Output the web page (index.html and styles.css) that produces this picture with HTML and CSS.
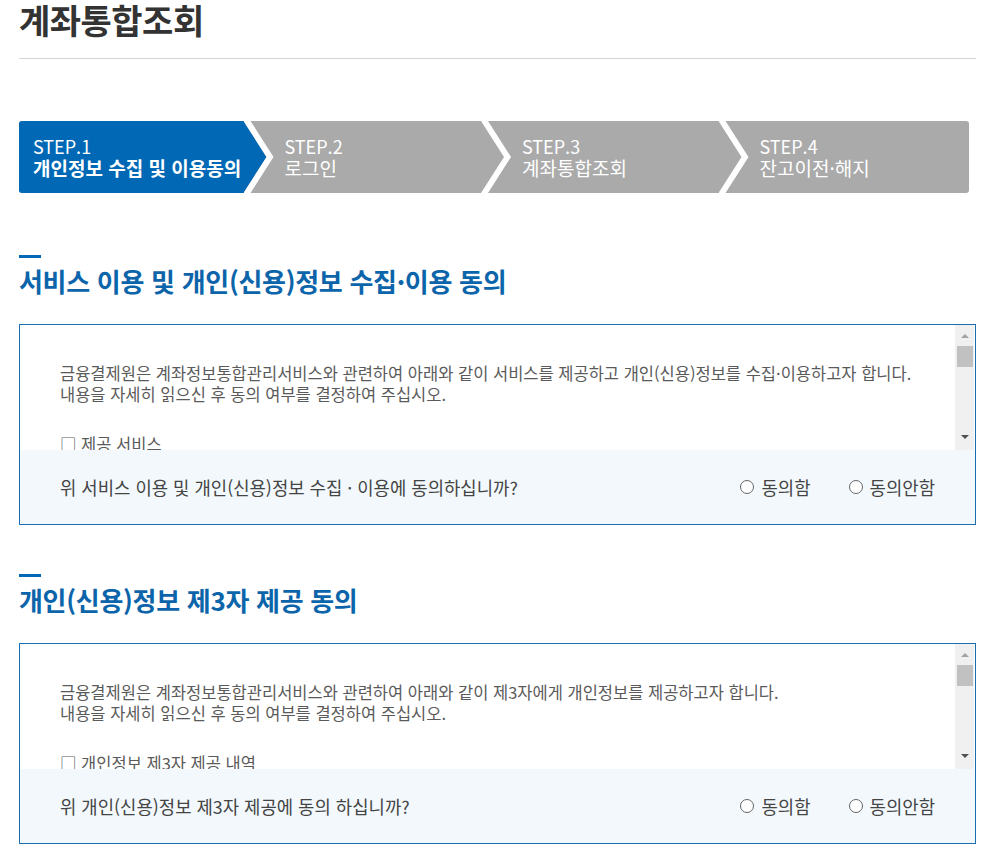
FILE: index.html
```html
<!DOCTYPE html>
<html lang="ko">
  <head>
    <meta charset="utf-8">
    <title>계좌통합조회</title>
    <link rel="stylesheet" href="styles.css">
  </head>
  <body>
    <div class="wrap">
      <h1 class="page-title">계좌통합조회</h1>

      <ol class="steps">
        <li class="step on"><span class="txt"><span class="num">STEP.1</span><strong>개인정보 수집 및 이용동의</strong></span></li>
        <li class="step"><span class="txt"><span class="num">STEP.2</span>로그인</span></li>
        <li class="step"><span class="txt"><span class="num">STEP.3</span>계좌통합조회</span></li>
        <li class="step"><span class="txt"><span class="num">STEP.4</span>잔고이전·해지</span></li>
      </ol>

      <section class="agree">
        <h2 class="tit">서비스 이용 및 개인(신용)정보 수집·이용 동의</h2>
        <div class="agree-box">
          <div class="terms-wrap">
            <div class="terms">
              <p>금융결제원은 계좌정보통합관리서비스와 관련하여 아래와 같이 서비스를 제공하고 개인(신용)정보를 수집·이용하고자 합니다.<br>내용을 자세히 읽으신 후 동의 여부를 결정하여 주십시오.</p>
              <p class="item">□ 제공 서비스</p>
              <p>- 금융회사 계좌 조회 서비스 : 본인 명의의 금융회사 계좌 목록 및 잔고 조회</p>
              <p>- 비활동성 계좌 잔고이전 및 해지 서비스</p>
            </div>
            <div class="scrollbar"><span class="arr up"></span><span class="thumb"></span><span class="arr down"></span></div>
          </div>
          <div class="question">
            <p>위 서비스 이용 및 개인(신용)정보 수집 · 이용에 동의하십니까?</p>
            <div class="choice">
              <label><input type="radio" name="agree1"> 동의함</label>
              <label><input type="radio" name="agree1"> 동의안함</label>
            </div>
          </div>
        </div>
      </section>

      <section class="agree">
        <h2 class="tit">개인(신용)정보 제3자 제공 동의</h2>
        <div class="agree-box">
          <div class="terms-wrap">
            <div class="terms">
              <p>금융결제원은 계좌정보통합관리서비스와 관련하여 아래와 같이 제3자에게 개인정보를 제공하고자 합니다.<br>내용을 자세히 읽으신 후 동의 여부를 결정하여 주십시오.</p>
              <p class="item">□ 개인정보 제3자 제공 내역</p>
              <p>- 제공받는 자 : 계좌정보통합관리서비스 참가 금융회사</p>
              <p>- 제공 목적 : 계좌 조회, 잔고이전 및 해지 처리</p>
            </div>
            <div class="scrollbar"><span class="arr up"></span><span class="thumb"></span><span class="arr down"></span></div>
          </div>
          <div class="question">
            <p>위 개인(신용)정보 제3자 제공에 동의 하십니까?</p>
            <div class="choice">
              <label><input type="radio" name="agree2"> 동의함</label>
              <label><input type="radio" name="agree2"> 동의안함</label>
            </div>
          </div>
        </div>
      </section>
    </div>
  </body>
</html>
```

FILE: styles.css
```css
body {
  margin: 0;
  font-family: "Noto Sans CJK KR", "Noto Sans", sans-serif;
  color: #555;
  background: #fff;
}
.wrap {
  width: 957px;
  padding: 0 0 40px 19px;
}

.page-title {
  margin: 0;
  padding-bottom: 19px;
  border-bottom: 1px solid #d4d4d4;
  font-size: 34px;
  line-height: 39px;
  font-weight: 700;
  color: #333;
  letter-spacing: -0.5px;
}

/* steps */
.steps {
  display: flex;
  width: 950px;
  height: 72px;
  margin: 62px 0 0 0;
  padding: 0;
  list-style: none;
  background: #aaa;
  border-radius: 3px;
  overflow: hidden;
}
.step {
  position: relative;
  flex: 0 0 25%;
  box-sizing: border-box;
  display: flex;
  align-items: center;
  padding-left: 28px;
  color: #fff;
  font-size: 19px;
  line-height: 21px;
}
.step.on { padding-left: 14px; }
.step .txt {
  position: relative;
  z-index: 3;
  margin-top: -1px;
  white-space: nowrap;
}
.step .num {
  display: block;
  font-size: 18px;
}
.step strong { font-weight: 700; }
.step.on::before {
  content: "";
  position: absolute;
  z-index: 1;
  top: 0;
  bottom: 0;
  left: 0;
  right: -10px;
  background: #0068b5;
  clip-path: polygon(0 0, calc(100% - 23px) 0, 100% 50%, calc(100% - 23px) 100%, 0 100%);
}
.step::after {
  content: "";
  position: absolute;
  z-index: 2;
  top: 0;
  bottom: 0;
  right: -17px;
  width: 30px;
  background: #fff;
  clip-path: polygon(0 0, 7px 0, 30px 50%, 7px 100%, 0 100%, 23px 50%);
}
.step:last-child::after { display: none; }

/* agree sections */
.agree { margin-top: 62px; }
.agree + .agree { margin-top: 49px; }
.tit {
  margin: 0;
  font-size: 26px;
  line-height: 30px;
  font-weight: 700;
  color: #0c65aa;
  letter-spacing: -0.3px;
}
.tit::before {
  content: "";
  display: block;
  width: 22px;
  height: 3px;
  margin-bottom: 8px;
  background: #0068b5;
}
.agree-box {
  margin-top: 28px;
  border: 1px solid #1a6db0;
}
.terms-wrap {
  display: flex;
  height: 125px;
}
.terms {
  flex: 1;
  overflow: hidden;
  padding: 38px 40px 0 40px;
  font-size: 16.5px;
  line-height: 21px;
  color: #5a5a5a;
}
.terms p { margin: 0; }
.terms p.item { margin-top: 29px; }

.scrollbar {
  display: flex;
  flex-direction: column;
  align-items: center;
  width: 19px;
  margin-right: 1px;
  background: #f0f0f0;
}
.arr {
  width: 0;
  height: 0;
  border-left: 4px solid transparent;
  border-right: 4px solid transparent;
}
.arr.up {
  margin-top: 9px;
  border-bottom: 4px solid #a3a3a3;
}
.arr.down {
  margin-top: auto;
  margin-bottom: 11px;
  border-top: 4px solid #505050;
}
.thumb {
  width: 16px;
  height: 21px;
  margin-top: 8px;
  background: #c1c1c1;
}

.question {
  display: flex;
  align-items: center;
  justify-content: space-between;
  height: 74px;
  padding: 0 40px;
  background: #f2f8fc;
  font-size: 17.8px;
  color: #444;
}
.question p { margin: 0; }
.choice {
  display: flex;
  gap: 38px;
}
.choice label {
  display: flex;
  align-items: center;
  gap: 7px;
  cursor: pointer;
}
.choice input {
  appearance: none;
  -webkit-appearance: none;
  width: 14px;
  height: 14px;
  margin: 0;
  border: 1px solid #666;
  border-radius: 50%;
  background: #fff;
}
```
